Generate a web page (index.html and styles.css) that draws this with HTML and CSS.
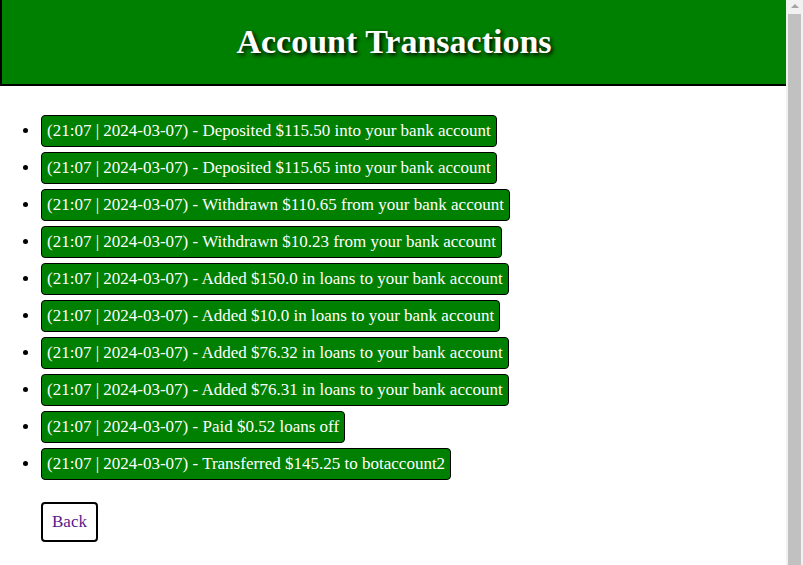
FILE: index.html
```html
<!DOCTYPE html>
<html>
<head>
<meta charset="utf-8">
<title>Account Transactions</title>
<link rel="stylesheet" href="styles.css">
</head>
<body>
<div class="page">
  <header class="header">
    <h1 class="title">Account Transactions</h1>
  </header>
  <ul class="tx-list">
    <li class="tx-item"><span class="tx">(21:07 | 2024-03-07) - Deposited $115.50 into your bank account</span></li>
    <li class="tx-item"><span class="tx">(21:07 | 2024-03-07) - Deposited $115.65 into your bank account</span></li>
    <li class="tx-item"><span class="tx">(21:07 | 2024-03-07) - Withdrawn $110.65 from your bank account</span></li>
    <li class="tx-item"><span class="tx">(21:07 | 2024-03-07) - Withdrawn $10.23 from your bank account</span></li>
    <li class="tx-item"><span class="tx">(21:07 | 2024-03-07) - Added $150.0 in loans to your bank account</span></li>
    <li class="tx-item"><span class="tx">(21:07 | 2024-03-07) - Added $10.0 in loans to your bank account</span></li>
    <li class="tx-item"><span class="tx">(21:07 | 2024-03-07) - Added $76.32 in loans to your bank account</span></li>
    <li class="tx-item"><span class="tx">(21:07 | 2024-03-07) - Added $76.31 in loans to your bank account</span></li>
    <li class="tx-item"><span class="tx">(21:07 | 2024-03-07) - Paid $0.52 loans off</span></li>
    <li class="tx-item"><span class="tx">(21:07 | 2024-03-07) - Transferred $145.25 to botaccount2</span></li>
  </ul>
  <div class="actions">
    <a class="back" href="#">Back</a>
  </div>
</div>
<div class="scrollbar" aria-hidden="true">
  <div class="scroll-arrow"></div>
  <div class="scroll-thumb"></div>
</div>
</body>
</html>
```
FILE: styles.css
```css
html, body {
  margin: 0;
  padding: 0;
}
html {
  scrollbar-width: none;
}
html::-webkit-scrollbar {
  display: none;
}
body {
  font-family: "Liberation Serif", "Times New Roman", serif;
  font-size: 17px;
  color: #000;
  background: #fff;
}
.page {
  margin-right: 17px;
}
.header {
  background: #008000;
  border-left: 2px solid #000;
  border-bottom: 2px solid #000;
  height: 84px;
  display: flex;
  align-items: center;
  justify-content: center;
}
.title {
  margin: 0;
  font-size: 34px;
  font-weight: bold;
  color: #fff;
  text-shadow: 2px 2px 4px #000;
}
.tx-list {
  margin: 29px 0 0 0;
  padding: 0 0 0 40px;
}
.tx-item {
  margin-bottom: 5px;
  line-height: 18px;
}
.tx {
  display: inline-block;
  margin-left: 1px;
  padding: 6px 5px;
  background: #008000;
  color: #fff;
  border: 1px solid #000;
  border-radius: 4px;
}
.actions {
  padding: 17px 0 40px 41px;
}
.back {
  display: inline-block;
  padding: 9px 9px;
  border: 2px solid #000;
  border-radius: 4px;
  background: #fff;
  color: #551a8b;
  text-decoration: none;
  line-height: 18px;
}
.scrollbar {
  position: fixed;
  top: 0;
  right: 0;
  width: 17px;
  height: 100%;
  background: #f1f1f1;
  display: flex;
  flex-direction: column;
  align-items: center;
}
.scroll-arrow {
  width: 0;
  height: 0;
  margin-top: 4px;
  border-left: 4px solid transparent;
  border-right: 4px solid transparent;
  border-bottom: 4px solid #a3a3a3;
}
.scroll-thumb {
  margin-top: 6px;
  width: 13px;
  flex: 1;
  background: #c1c1c1;
}
```
